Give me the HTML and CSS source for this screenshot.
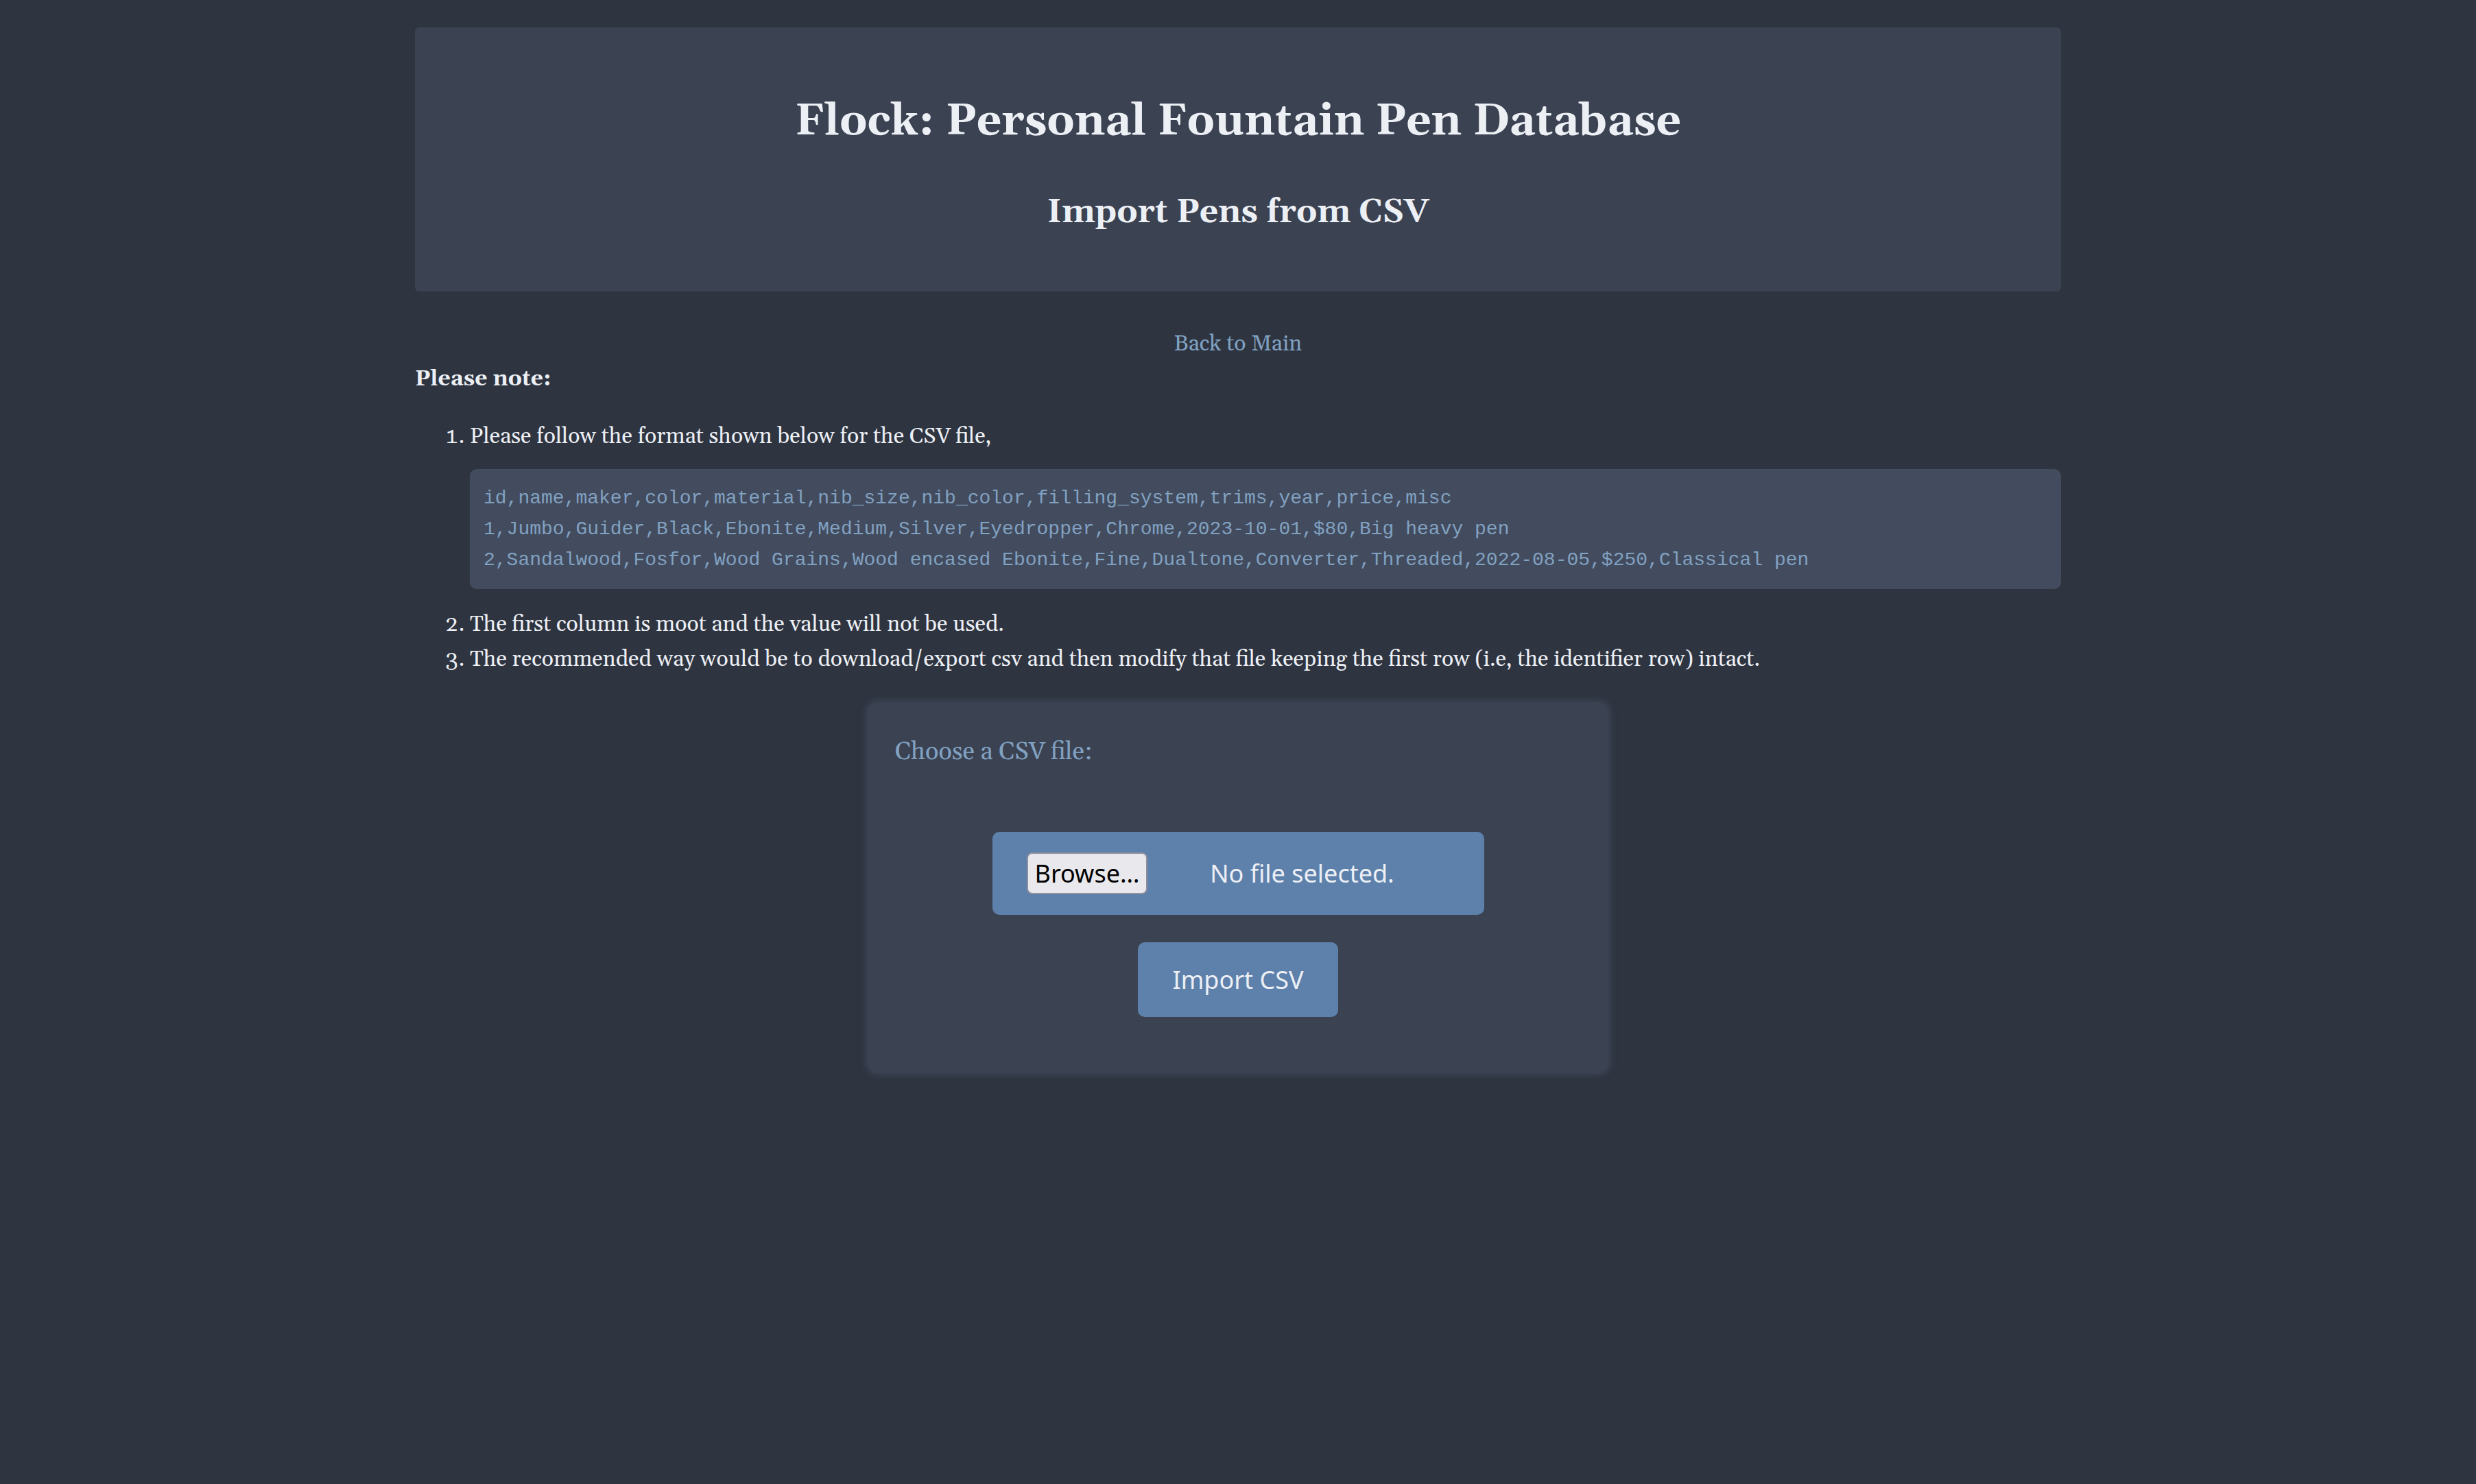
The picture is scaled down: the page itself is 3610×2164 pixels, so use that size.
FILE: index.html
```html
<!DOCTYPE html>
<html lang="en">
<head>
<meta charset="utf-8">
<title>Flock: Import Pens from CSV</title>
<link rel="stylesheet" href="styles.css">
</head>
<body>
<div class="page">
  <header class="banner">
    <h1 class="banner-title">Flock: Personal Fountain Pen Database</h1>
    <h2 class="banner-subtitle">Import Pens from CSV</h2>
  </header>
  <nav class="back"><a class="back-link" href="#">Back to Main</a></nav>
  <main>
    <strong class="note">Please note:</strong>
    <ol class="rules">
      <li>Please follow the format shown below for the CSV file,
<pre class="sample">id,name,maker,color,material,nib_size,nib_color,filling_system,trims,year,price,misc
1,Jumbo,Guider,Black,Ebonite,Medium,Silver,Eyedropper,Chrome,2023-10-01,$80,Big heavy pen
2,Sandalwood,Fosfor,Wood Grains,Wood encased Ebonite,Fine,Dualtone,Converter,Threaded,2022-08-05,$250,Classical pen</pre>
      </li>
      <li>The first column is moot and the value will not be used.</li>
      <li>The recommended way would be to download/export csv and then modify that file keeping the first row (i.e, the identifier row) intact.</li>
    </ol>
    <form class="upload">
      <label class="upload-label" for="csv-file">Choose a CSV file:</label>
      <div class="picker">
        <span class="picker-browse">Browse…</span>
        <span class="picker-status">No file selected.</span>
        <input class="picker-input" type="file" id="csv-file" accept=".csv">
      </div>
      <button class="submit" type="submit">Import CSV</button>
    </form>
  </main>
</div>
</body>
</html>
```
FILE: styles.css
```css
* {
  box-sizing: border-box;
}

body {
  margin: 0;
  background: #2e3440;
  color: #eceff4;
  font-family: Georgia, Gelasio, "Liberation Serif", serif;
  font-size: 32px;
  line-height: 51px;
}

.page {
  max-width: 2480px;
  margin: 0 auto;
  padding: 40px;
}

.banner {
  padding: 44px 40px 36px;
  margin-bottom: 51px;
  border-radius: 6px;
  background: #3b4252;
  text-align: center;
}

.banner-title {
  margin: 43px 0 42px;
  font-size: 64px;
  line-height: 102px;
}

.banner-subtitle {
  margin: 40px 0 41px;
  font-size: 48px;
  line-height: 77px;
}

.back {
  text-align: center;
}

.back-link {
  color: #81a1c1;
  text-decoration: none;
}

.note {
  display: block;
}

.rules {
  margin: 33px 0 37px;
  padding-left: 80px;
}

.sample {
  margin: 22px 0 26px;
  padding: 20px;
  border-radius: 10px;
  background: #434c5e;
  color: #81a1c1;
  font-family: "Courier New", "Liberation Mono", monospace;
  font-size: 28px;
  line-height: 45px;
  overflow-x: auto;
}

.upload {
  display: flex;
  flex-direction: column;
  align-items: center;
  max-width: 1080px;
  margin: 0 auto;
  padding: 44px 40px 82px;
  border-radius: 16px;
  background: #3b4252;
  box-shadow: 0 0 10px 4px #3b4252;
}

.upload-label {
  align-self: flex-start;
  margin-bottom: 87px;
  color: #81a1c1;
  font-size: 36px;
  line-height: 58px;
}

.picker {
  position: relative;
  display: flex;
  align-items: center;
  width: 717px;
  max-width: 100%;
  padding: 30px 50px;
  border-radius: 10px;
  background: #5e81ac;
  font-family: "Noto Sans", sans-serif;
  font-size: 36px;
  line-height: 49px;
}

.picker-browse {
  padding: 4px 10px;
  border: 2px solid #8f8f9d;
  border-radius: 8px;
  background: #e9e9ed;
  color: #000;
}

.picker-status {
  flex: 1;
  padding-left: 10px;
  text-align: center;
}

.picker-input {
  position: absolute;
  inset: 0;
  width: 100%;
  height: 100%;
  opacity: 0;
  cursor: pointer;
}

.submit {
  margin-top: 40px;
  padding: 30px 50px;
  border: 0;
  border-radius: 10px;
  background: #5e81ac;
  color: #eceff4;
  font-family: "Noto Sans", sans-serif;
  font-size: 36px;
  line-height: 49px;
}
```
